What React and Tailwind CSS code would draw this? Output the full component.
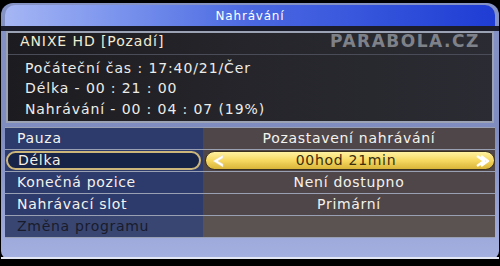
const INFO = [
  "Počáteční čas : 17:40/21/Čer",
  "Délka - 00 : 21 : 00",
  "Nahrávání - 00 : 04 : 07 (19%)",
];

const MENU = [
  { label: "Pauza", value: "Pozastavení nahrávání" },
  { label: "Délka", value: "00hod 21min", selected: true },
  { label: "Konečná pozice", value: "Není dostupno" },
  { label: "Nahrávací slot", value: "Primární" },
  { label: "Změna programu", value: "", disabled: true },
];

const Chevron = ({ dir }) => (
  <svg width="16" height="16" viewBox="0 0 16 16" className="shrink-0">
    {dir === "left" ? (
      <path d="M13 2 L3 8 L13 14 L13 11 L8 8 L13 5 Z" fill="#ffffff" stroke="#e0d8b8" strokeWidth="0.5" />
    ) : (
      <path d="M3 3 L10 8 L3 13 M7 3 L14 8 L7 13" fill="none" stroke="#ffffff" strokeWidth="2.2" strokeLinejoin="round" />
    )}
  </svg>
);

const MenuRow = ({ item }) => {
  if (item.selected) {
    return (
      <div className="flex h-[21px] bg-[#2c3a6c]">
        <div className="w-[198px] flex items-center py-px pl-px pr-[2px]">
          <div className="flex-1 h-full rounded-full border-2 border-[#cdb67a] bg-[#172347] flex items-center pl-[10px] text-[#f4f0e4]">
            {item.label}
          </div>
        </div>
        <div className="flex-1 bg-[#4f4649] flex items-center py-px pl-[2px]">
          <div className="flex-1 h-full rounded-full border border-[#3a3020] bg-gradient-to-b from-[#fff2a0] via-[#f6d860] to-[#d9b438] flex items-center justify-between px-[4px] text-[#3a2e10]">
            <Chevron dir="left" />
            <span className="-ml-2">{item.value}</span>
            <Chevron dir="right" />
          </div>
        </div>
      </div>
    );
  }
  return (
    <div className="flex h-[21px]">
      <div
        className={`w-[198px] flex items-center pl-[12px] ${
          item.disabled ? "text-[#181c2c] bg-[#3a4672]" : "text-[#f4f2ec] bg-[#2c3a6c]"
        }`}
      >
        {item.label}
      </div>
      <div className={`flex-1 flex items-center justify-center text-[#f4f2ec] ${item.disabled ? "bg-[#5a5352]" : "bg-[#4f4649]"}`}>
        {item.value}
      </div>
    </div>
  );
};

export default function App() {
  return (
    <div
      className="relative w-[500px] h-[266px] overflow-hidden bg-black"
      style={{ fontFamily: '"DejaVu Sans", "Noto Sans", sans-serif' }}
    >
      <div className="mt-[3px] mx-[1px] h-[256px] rounded-t-[12px] rounded-b-[8px] bg-gradient-to-b from-[#8492c4] via-[#7f8cc0] to-[#a4b0e0] flex flex-col px-[4px] pt-[2px]">
        {/* title */}
        <div className="h-[21px] rounded-t-[10px] bg-gradient-to-r from-[#a6b6f4] via-[#4b68e2] to-[#1f3cd4] flex items-center justify-center text-white text-[12px] tracking-[0.8px]">
          Nahrávání
        </div>
        <div className="h-[5px] -mx-[4px] bg-[#1c1d2c]" />

        {/* info panel */}
        <div className="mx-[1px] h-[92px] border-2 border-[#9aa2b4] bg-gradient-to-r from-[#1c1c20] via-[#25252b] to-[#2b2c33] text-[14px] tracking-[0.9px]">
          <div className="h-[22px] flex items-end pl-[12px] pb-[2px] text-[#f1ebd2] border-b border-[#4a4c58]">
            ANIXE HD [Pozadí]
          </div>
          <div className="flex flex-col pl-[17px] pt-[3px] text-[#ecece8]">
            {INFO.map((line) => (
              <div key={line} className="h-[20.5px] flex items-center">
                {line}
              </div>
            ))}
          </div>
        </div>

        {/* menu */}
        <div className="mt-[4px] flex flex-col gap-px bg-[#9aa0b4] py-px text-[14px] tracking-[0.7px]">
          {MENU.map((item) => (
            <MenuRow key={item.label} item={item} />
          ))}
        </div>
        <div className="flex-1" />
        <div className="h-[2px] -mx-[4px] bg-[#e4e8f4]" />
      </div>

      <div className="absolute left-[330px] top-[29px] text-[17px] font-bold tracking-[1.5px] text-[#b8bcc4] opacity-60">
        PARABOLA.CZ
      </div>
    </div>
  );
}
